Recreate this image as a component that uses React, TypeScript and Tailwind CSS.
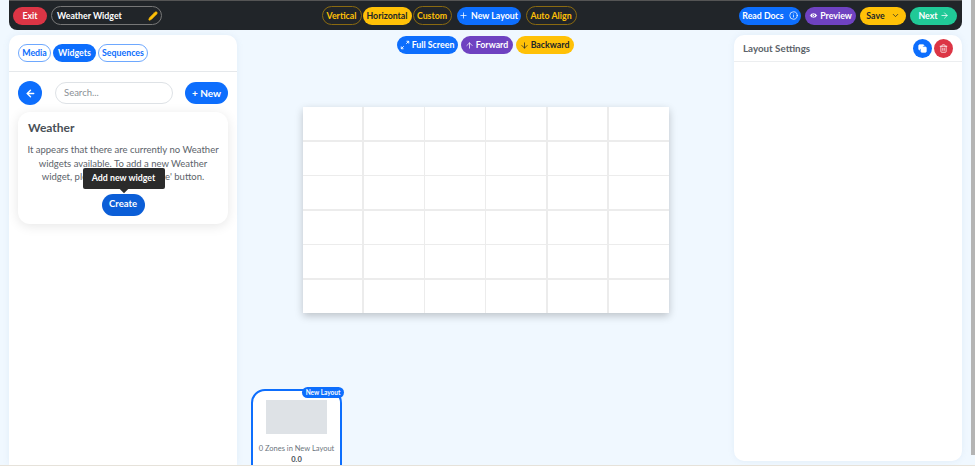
import React from "react";
import { ArrowLeft, ArrowRight, ArrowUp, ArrowDown, ChevronDown, Copy, Eye, Info, Pencil, Plus, Trash2 } from "lucide-react";

const font = { fontFamily: 'Lato, "Noto Sans", Arial, sans-serif' };

function Outline({ children, className = "" }: { children: React.ReactNode; className?: string }) {
  return <div className={`flex h-[19px] items-center justify-center rounded-full border border-[#8a6a10] text-[8.8px] font-bold text-[#ffc107] ${className}`}>{children}</div>;
}

function Pill({ children, className = "" }: { children: React.ReactNode; className?: string }) {
  return <div className={`flex items-center justify-center rounded-full text-[8.8px] font-bold ${className}`}>{children}</div>;
}

function FullScreenIcon() {
  return (
    <svg viewBox="0 0 12 12" className="h-[10px] w-[10px]" fill="none" stroke="white" strokeWidth="1.1">
      <path d="M1.5 10.5 L4.5 7.5 M1.5 7.8 V10.5 H4.2 M10.5 1.5 L7.5 4.5 M7.8 1.5 H10.5 V4.2" />
    </svg>
  );
}

function TopBar() {
  return (
    <header className="flex h-[30px] shrink-0 items-center justify-between rounded-b-[8px] border-t border-[#555] bg-[#212529] pl-[4px] pr-[5px]">
      <div className="flex items-center gap-[4px]">
        <Pill className="h-[18px] w-[34px] bg-[#dc3545] text-white">Exit</Pill>
        <div className="flex h-[19px] w-[111px] items-center justify-between rounded-full border border-[#777] pl-[5px] pr-[3px] text-[8.8px] font-bold text-white">
          <span>Weather Widget</span>
          <Pencil className="h-[10px] w-[10px] fill-[#ffc107] text-[#ffc107]" />
        </div>
      </div>
      <div className="ml-[-3px] flex items-center">
        <Outline className="w-[40px]">Vertical</Outline>
        <Pill className="ml-[1px] h-[18px] w-[49px] bg-[#ffc107] text-[#212529]">Horizontal</Pill>
        <Outline className="ml-[1px] w-[39px]">Custom</Outline>
        <Pill className="ml-[5px] h-[18px] w-[64px] gap-[3px] bg-[#0d6efd] text-white"><Plus className="h-[9px] w-[9px]" />New Layout</Pill>
        <Outline className="ml-[5px] w-[51px]">Auto Align</Outline>
      </div>
      <div className="flex items-center gap-[4px]">
        <Pill className="h-[18px] w-[62px] gap-[5px] bg-[#0d6efd] text-white">Read Docs<Info className="h-[9px] w-[9px]" /></Pill>
        <Pill className="h-[18px] w-[51px] gap-[2px] bg-[#6f42c1] text-white"><Eye className="h-[9px] w-[9px] fill-white text-[#6f42c1]" />Preview</Pill>
        <Pill className="h-[18px] w-[46px] gap-[6px] bg-[#ffc107] text-[#212529]">Save<ChevronDown className="h-[9px] w-[9px]" /></Pill>
        <Pill className="h-[18px] w-[47px] gap-[2px] bg-[#20c997] text-white">Next<ArrowRight className="h-[9px] w-[9px]" /></Pill>
      </div>
    </header>
  );
}

function LeftPanel() {
  return (
    <aside className="flex w-[228px] shrink-0 flex-col rounded-t-[10px] bg-white shadow-[0_0_6px_rgba(120,160,200,0.12)]">
      <div className="flex h-[37px] shrink-0 items-center gap-[2px] border-b border-[#e5e8eb] pl-[9px]">
        <Pill className="h-[18px] w-[33px] border border-[#6ea8fe] text-[#0d6efd]">Media</Pill>
        <Pill className="h-[18px] w-[43px] bg-[#0d6efd] text-white">Widgets</Pill>
        <Pill className="h-[18px] w-[50px] border border-[#6ea8fe] text-[#0d6efd]">Sequences</Pill>
      </div>
      <div className="flex shrink-0 items-center pl-[9px] pr-[9px] pt-[9px]">
        <div className="flex h-[24px] w-[24px] items-center justify-center rounded-full bg-[#0d6efd] text-white"><ArrowLeft className="h-[11px] w-[11px]" strokeWidth={3} /></div>
        <div className="ml-[13px] flex h-[22px] w-[118px] items-center rounded-full border border-[#dee2e6] pl-[8px] text-[9.5px] text-[#8a9096]">Search...</div>
        <div className="ml-auto flex h-[22px] w-[43px] items-center justify-center rounded-full bg-[#0d6efd] text-[10px] font-bold text-white">+ New</div>
      </div>
      <div className="mx-[9px] mt-[7px] flex h-[112px] shrink-0 flex-col items-center rounded-[12px] bg-white pt-[8px] shadow-[0_2px_12px_rgba(0,0,0,0.10)]">
        <div className="w-full pl-[10px] text-[12px] font-bold leading-[15px] text-[#495057]">Weather</div>
        <p className="mt-[8px] whitespace-nowrap text-center text-[9.5px] leading-[13.5px] text-[#5c636a]">
          It appears that there are currently no Weather
          <br />
          widgets available. To add a new Weather
          <br />
          widget, please click the 'Create' button.
        </p>
        <div className="relative mt-[10px]">
          <div className="flex h-[22px] w-[43px] items-center justify-center rounded-full bg-[#0b5ed7] text-[9.5px] font-bold text-white">Create</div>
          <div className="absolute left-[-19px] top-[-26px] flex h-[21px] w-[82px] items-center justify-center rounded-[2px] bg-[#2b2b2b] text-[8.8px] font-bold text-white">
            Add new widget
            <span className="absolute bottom-[-3px] left-[38px] h-[6px] w-[6px] rotate-45 bg-[#2b2b2b]" />
          </div>
        </div>
      </div>
    </aside>
  );
}

function Canvas() {
  return (
    <div className="mt-[53px] grid h-[206px] w-[366px] shrink-0 grid-cols-6 grid-rows-6 gap-[1.5px] bg-[#ececec] shadow-[0_3px_8px_rgba(0,0,0,0.22)]">
      {Array.from({ length: 36 }).map((_, i) => (
        <div key={i} className="bg-white" />
      ))}
    </div>
  );
}

function Center() {
  return (
    <main className="flex min-w-0 flex-1 flex-col items-center">
      <div className="mt-[1px] flex shrink-0 items-center gap-[3px] pr-[1px]">
        <Pill className="h-[18px] w-[61px] gap-[2px] bg-[#0d6efd] text-white"><FullScreenIcon />Full Screen</Pill>
        <Pill className="h-[18px] w-[52px] gap-[2px] bg-[#6f42c1] text-white"><ArrowUp className="h-[9px] w-[9px]" />Forward</Pill>
        <Pill className="h-[18px] w-[58px] gap-[2px] bg-[#ffc107] text-[#212529]"><ArrowDown className="h-[9px] w-[9px]" />Backward</Pill>
      </div>
      <Canvas />
      <div className="mt-[76px] w-full shrink-0 pl-[14px]">
        <div className="relative h-[90px] w-[91px] rounded-[14px] border-2 border-[#0d6efd] bg-white">
          <div className="absolute right-[-4px] top-[-4px] flex h-[11px] w-[42px] items-center justify-center rounded-full bg-[#0d6efd] text-[6.5px] font-bold text-white">New Layout</div>
          <div className="mx-auto mt-[9px] h-[34px] w-[61px] bg-[#dee2e6]" />
          <div className="mt-[9px] text-center text-[7.5px] text-[#6c757d]">0 Zones in New Layout</div>
          <div className="text-center text-[7.5px] font-bold text-[#495057]">0.0</div>
        </div>
      </div>
    </main>
  );
}

function RightPanel() {
  return (
    <aside className="mb-[4px] flex w-[228px] shrink-0 flex-col rounded-[10px] bg-white shadow-[0_0_6px_rgba(120,160,200,0.12)]">
      <div className="flex h-[27px] shrink-0 items-center justify-between border-b border-[#eceef0] pl-[9px] pr-[9px]">
        <span className="text-[9.8px] font-bold text-[#5c636a]">Layout Settings</span>
        <div className="flex gap-[2px]">
          <div className="flex h-[19px] w-[19px] items-center justify-center rounded-full bg-[#0d6efd] text-white"><Copy className="h-[9px] w-[9px] fill-white" /></div>
          <div className="flex h-[19px] w-[19px] items-center justify-center rounded-full bg-[#dc3545] text-white"><Trash2 className="h-[9px] w-[9px]" /></div>
        </div>
      </div>
    </aside>
  );
}

export default function App() {
  return (
    <div className="flex h-[466px] w-[975px] overflow-hidden border-b border-[#e6e2da] bg-[#f0f8ff]" style={font}>
      <div className="flex min-w-0 flex-1 flex-col px-[9px]">
        <TopBar />
        <div className="mt-[5px] flex min-h-0 flex-1">
          <LeftPanel />
          <Center />
          <RightPanel />
        </div>
      </div>
      <div className="h-[455px] w-[4px] shrink-0 bg-[#b4b4b4]" />
    </div>
  );
}
